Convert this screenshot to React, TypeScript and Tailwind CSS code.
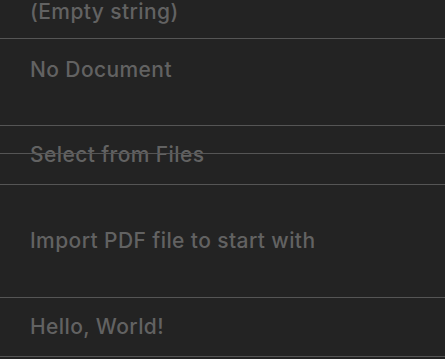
const ROWS = [
  { label: "(Empty string)", height: "h-[38px]", align: "items-center pb-[15px]" },
  { label: "No Document", height: "h-[86px]", align: "items-start pt-[19px]" },
  { label: "Select from Files", height: "h-[58px]", align: "items-center", overlay: true },
  { label: "Import PDF file to start with", height: "h-[112px]", align: "items-center" },
  { label: "Hello, World!", height: "h-[58px]", align: "items-center" },
];

export default function App() {
  return (
    <div
      className="w-[445px] h-[359px] overflow-hidden bg-[#232323]"
      style={{ fontFamily: "Inter, 'Noto Sans', sans-serif" }}
    >
      {ROWS.map((row) => (
        <div key={row.label}>
          <div className={`relative flex ${row.height} ${row.align} pl-[30px]`}>
            <span className="text-[21px] font-medium leading-[24px] tracking-[0.4px] text-[#626262]">{row.label}</span>
            {row.overlay && <div className="absolute inset-x-0 top-[27px] h-px bg-[#555555]" />}
          </div>
          <div className="h-px bg-[#555555]" />
        </div>
      ))}
    </div>
  );
}
